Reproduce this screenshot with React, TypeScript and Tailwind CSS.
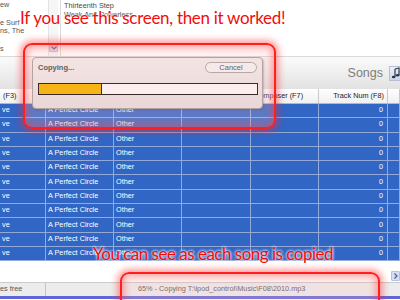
const cols = [46, 68, 68, 69, 68, 69, 12];
const headers = ["(F3)", "Album (F4)", "Genre (F5)", "Year (F6)", "Composer (F7)", "Track Num (F8)", ""];
const rows = Array.from({ length: 11 });

function RedBox({ className }: { className: string }) {
  return (
    <div
      className={
        "absolute rounded-[9px] border-2 border-[#ff1f1f] bg-[rgba(255,190,190,0.22)] shadow-[0_0_6px_3px_rgba(255,40,40,0.45),inset_0_0_6px_3px_rgba(255,60,60,0.4)] " +
        className
      }
    />
  );
}

export default function App() {
  return (
    <div className="relative h-[300px] w-[400px] overflow-hidden bg-white font-['Liberation_Sans',Arial,sans-serif] text-[7.3px] text-[#555]">
      {/* library lists */}
      <div className="flex h-[57px] border-b border-[#d9d9d9]">
        <div className="w-[48px] overflow-hidden whitespace-nowrap pt-[1px] leading-[8.8px]">
          <div>ew</div>
          <div>&nbsp;</div>
          <div>e Surf</div>
          <div>ns, The</div>
          <div>&nbsp;</div>
          <div>s</div>
        </div>
        <div className="flex w-[10px] flex-col justify-end border-l border-[#e4e4e4] bg-[#f6f6f6] pb-[4px]">
          <div className="flex h-[9px] w-[9px] items-center justify-center rounded-[1px] border border-[#b4c2e6] bg-[#d4def8]">
            <svg width="6" height="4" viewBox="0 0 6 4">
              <path d="M0.5 0.5 L3 3 L5.5 0.5" fill="none" stroke="#4d6185" strokeWidth="1.2" />
            </svg>
          </div>
        </div>
        <div className="ml-[2px] whitespace-nowrap border-l border-[#dadada] pl-[3px] pt-[1px] leading-[9px] text-[#4a4a4a]">
          <div>Thirteenth Step</div>
          <div>Weak And Powerless</div>
        </div>
      </div>

      {/* toolbar */}
      <div className="flex h-[32px] items-center justify-end bg-gradient-to-b from-[#fbfbfb] to-[#e2e2e2]">
        <span className="mr-[6px] mt-[1px] text-[12.5px] text-[#7d7d7d]">Songs</span>
        <div className="mr-[-3px] flex h-[15px] w-[14px] items-center justify-center border border-[#b6bfd2] bg-gradient-to-b from-[#eef1f8] to-[#cdd6e8]">
          <svg width="10" height="12" viewBox="0 0 10 12">
            <path d="M4 2 L8 1 L8 8" fill="none" stroke="#2c3550" strokeWidth="1.2" />
            <path d="M4 2 L4 10" fill="none" stroke="#2c3550" strokeWidth="1.2" />
            <ellipse cx="2.6" cy="10" rx="1.8" ry="1.3" fill="#2c3550" />
            <ellipse cx="6.6" cy="8.2" rx="1.8" ry="1.3" fill="#2c3550" />
          </svg>
        </div>
      </div>

      {/* header */}
      <div className="flex h-[15px] border-b border-[#b8b8b8] bg-gradient-to-b from-white to-[#f0f0f0] text-[#222]">
        {cols.map((w, i) => (
          <div
            key={i}
            style={{ width: w }}
            className={
              "flex shrink-0 items-center overflow-hidden whitespace-nowrap border-r border-[#c9c9c9] px-[3px] " +
              (i === 5 ? "justify-end" : "")
            }
          >
            {headers[i]}
          </div>
        ))}
      </div>

      {/* rows */}
      <div className="bg-[#3166c5] text-white">
        {rows.map((_, r) => (
          <div key={r} className="flex h-[14.3px] border-b border-[#93a9da]">
            {cols.map((w, i) => (
              <div
                key={i}
                style={{ width: w }}
                className={
                  "flex shrink-0 items-center overflow-hidden whitespace-nowrap border-r border-[#93a9da] " +
                  (i === 5 ? "justify-end pr-[4px]" : "pl-[2px]")
                }
              >
                {i === 0 ? "ve" : i === 1 ? "A Perfect Circle" : i === 2 ? "Other" : i === 5 ? "0" : ""}
              </div>
            ))}
          </div>
        ))}
      </div>

      {/* horizontal scroll area */}
      <div className="flex h-[21px] items-end justify-end pb-[1px]">
        <div className="flex h-[10px] w-[9px] items-center justify-center rounded-[1px] border border-[#b4c2e6] bg-[#d4def8]">
          <svg width="4" height="6" viewBox="0 0 4 6">
            <path d="M0.5 0.5 L3 3 L0.5 5.5" fill="none" stroke="#4d6185" strokeWidth="1.2" />
          </svg>
        </div>
      </div>

      {/* status bar */}
      <div className="flex h-[14px] border-t border-[#cbcbcb] bg-[#ececec] text-[#555]">
        <div className="flex w-[46px] items-center whitespace-nowrap border-r border-[#c4c4c4]">es free</div>
        <div className="flex flex-1 items-center whitespace-nowrap pl-[92px]">
          65% - Copying T:\ipod_control\Music\F08\2010.mp3
        </div>
      </div>
      <div className="h-[3px] bg-[#5f66d8]" />

      {/* annotation boxes */}
      <RedBox className="left-[23px] top-[43px] h-[86px] w-[253px]" />
      <RedBox className="left-[120px] top-[272px] h-[40px] w-[260px]" />

      {/* copying dialog */}
      <div className="absolute left-[32px] top-[57px] h-[52px] w-[231px] rounded-[4px] border border-[#b7a2a2] bg-gradient-to-b from-[#f3e4e4] to-[#ead7d7] px-[5px] pt-[4px] shadow-[1px_1px_2px_rgba(120,80,80,0.35)]">
        <div className="flex items-center justify-between">
          <span className="text-[7.5px] font-bold text-[#606060]">Copying...</span>
          <div className="flex h-[11px] w-[52px] items-center justify-center rounded-full border border-[#b9a6a6] bg-[#f5e9e9] text-[7.5px] text-[#666]">
            Cancel
          </div>
        </div>
        <div className="mt-[10px] flex h-[12px] w-[220px] border border-[#3b2a2a] bg-[#fdeeee]">
          <div className="w-[63px] border-r border-[#3b2a2a] bg-[#f6b416]" />
        </div>
      </div>

      {/* annotation text */}
      <div className="absolute left-[20px] top-[9px] whitespace-nowrap font-['Lato',sans-serif] text-[17px] leading-none tracking-[-0.3px] text-[#f20c0c] [text-shadow:0_0_3px_#fff,0_0_3px_#fff]">
        If you see this screen, then it worked!
      </div>
      <div className="absolute left-[93px] top-[245px] whitespace-nowrap font-['Lato',sans-serif] text-[17px] leading-none tracking-[-0.5px] text-[#f20c0c] [text-shadow:0_0_3px_#fff,0_0_3px_#fff]">
        You can see as each song is copied
      </div>
    </div>
  );
}
